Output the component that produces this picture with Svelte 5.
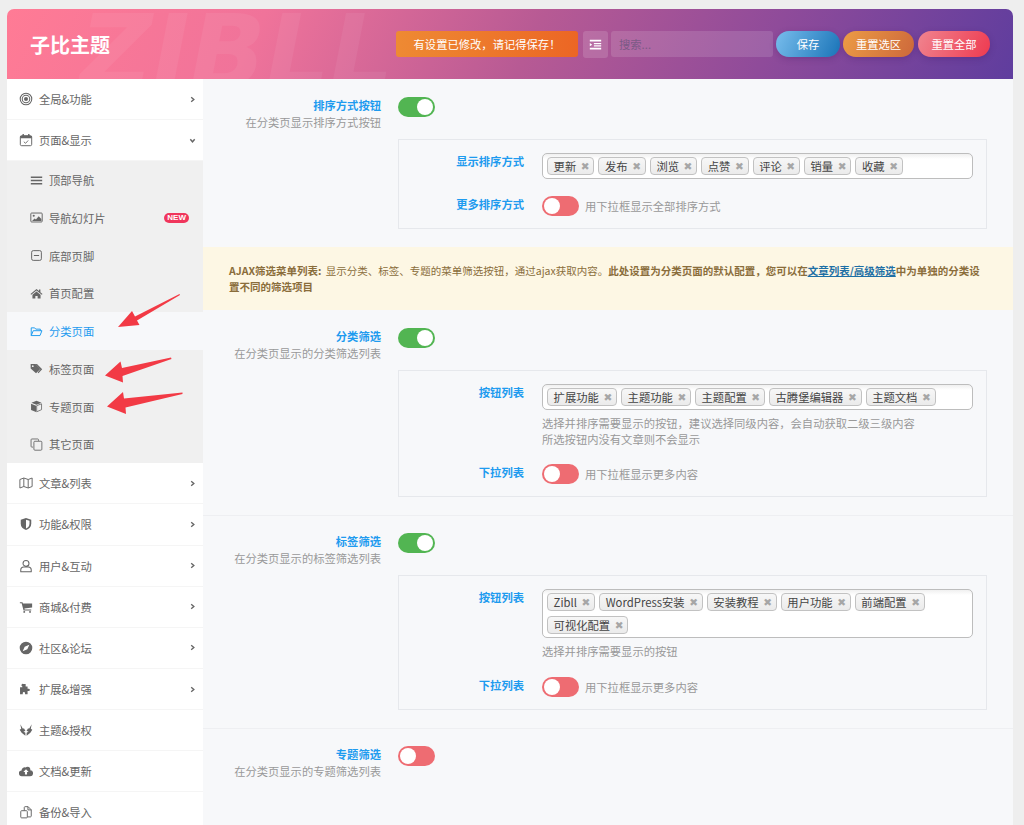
<script lang="ts">
  const icons: Record<string, string> = {
    target: '<circle cx="8" cy="8" r="6.6" fill="none" stroke="currentColor" stroke-width="1.2"/><circle cx="8" cy="8" r="4.3" fill="none" stroke="currentColor" stroke-width="1.2"/><circle cx="8" cy="8" r="2.3" fill="currentColor"/>',
    calendar: '<rect x="1.5" y="3" width="13" height="11.5" rx="1.5" fill="none" stroke="currentColor" stroke-width="1.1"/><path d="M1.5 3.5h13v2.5h-13zM4 1h1.6v3H4zM10.4 1H12v3h-1.6z" fill="currentColor"/><path d="M5.5 10l2 1.8 3-3.3" fill="none" stroke="currentColor" stroke-width="1"/>',
    bars: '<path d="M1 3h14v2H1zM1 7h14v2H1zM1 11h14v2H1z" fill="currentColor"/>',
    image: '<rect x="1" y="2.5" width="14" height="11" rx="1" fill="none" stroke="currentColor" stroke-width="1.2"/><circle cx="4.6" cy="5.8" r="1.3" fill="currentColor"/><path d="M2.500 12.200l3.200-3 1.600 1.300 3.400-4 3.300 3.400v2.300z" fill="currentColor"/>',
    minus: '<rect x="2" y="2" width="12" height="12" rx="2" fill="none" stroke="currentColor" stroke-width="1.2"/><path d="M4.800 7.400h6.400v1.200H4.800z" fill="currentColor"/>',
    home: '<path d="M8 2.400L.6 8.500l.9 1L8 4.200l6.500 5.300.9-1-2.600-2.100V3h-1.700v1.900zM3 9.600v4.600h3.600v-3.200h2.800v3.200H13V9.600L8 5.600z" fill="currentColor"/>',
    folder: '<path d="M1.500 13V3.500h4.200l1.400 1.600h5.600V7M1.500 13h10.800l2.400-6H4z" fill="none" stroke="currentColor" stroke-width="1.2" stroke-linejoin="round"/>',
    tags: '<path d="M.8 2.500h6l6 6-5.400 5.400-6.600-6zM3.400 4a1.100 1.100 0 100 2.200 1.100 1.100 0 000-2.200z" fill="currentColor" fill-rule="evenodd"/><path d="M8.600 2.500l6.400 6.300-4.600 5.100-1-1 3.400-4.100-6-6.300z" fill="currentColor"/>',
    cube: '<path d="M8 1l6.200 2.400L8 5.900 1.800 3.400zM1.300 4.500l6.100 2.500v7.800l-6.100-2.600z" fill="currentColor"/><path d="M14.200 4.700v7.200l-6 2.600V7z" fill="none" stroke="currentColor" stroke-width="1"/>',
    copy: '<path d="M10.500 3.500V2.200c0-.6-.4-1-1-1H2.300c-.6 0-1 .4-1 1v8c0 .6.4 1 1 1h1.400" fill="none" stroke="currentColor" stroke-width="1.1"/><rect x="4.800" y="4" width="9.800" height="11" rx="1.200" fill="none" stroke="currentColor" stroke-width="1.1"/>',
    map: '<path d="M1 4l4.500-1.700 5 1.700L15 2.300V12l-4.500 1.700-5-1.700L1 13.700zM5.500 2.300V12M10.500 4v9.700" fill="none" stroke="currentColor" stroke-width="1.1" stroke-linejoin="round"/>',
    shield: '<path d="M8 1.200l6 2v4.600c0 3.600-2.600 6-6 7-3.400-1-6-3.400-6-7V3.200z" fill="currentColor"/><path d="M8 3v10.200c2.300-.9 4-2.700 4-5.400V4.400z" fill="#fff"/>',
    user: '<circle cx="8" cy="5" r="3.400" fill="none" stroke="currentColor" stroke-width="1.2"/><path d="M2 14.600v-1.800c0-2.200 1.600-3.600 3.400-3.600h5.200c1.800 0 3.400 1.400 3.400 3.600v1.800z" fill="none" stroke="currentColor" stroke-width="1.2" stroke-linejoin="round"/>',
    cart: '<path d="M1 2.500h3l.5 1.400H15v4.700l-8.800 1 .2 1.200H14v1.300H5.200L3 3.800H1z" fill="currentColor"/><circle cx="6" cy="13.600" r="1.100" fill="currentColor"/><circle cx="12.600" cy="13.600" r="1.100" fill="currentColor"/>',
    compass: '<path d="M8 .8a7.200 7.200 0 110 14.400A7.200 7.200 0 018 .8zm3.800 3.400L6.500 6.500 4.200 11.800l5.300-2.300z" fill="currentColor" fill-rule="evenodd"/>',
    puzzle: '<path d="M5 2.200h2.600v3h2.200v2.600h1.300a1.300 1.300 0 110 2.600H9.800V14H6.900v-1.400a1.300 1.300 0 10-2.600 0V14H1.200V6h2.600V5.200A1.400 1.400 0 015 2.200z" fill="currentColor"/>',
    fox: '<path d="M1.500 1.500l2.800 4.700h1.500L7.400 9 5 9.600l2.300 1.400v3.500L3 11 .8 7.800l1.700-1.300zM14.500 1.500l-2.800 4.700h-1.500L8.600 9l2.400.6-2.300 1.400v3.500L13 11l2.200-3.200-1.700-1.300z" fill="currentColor"/>',
    cloud: '<path d="M12.800 7.200A3.200 3.200 0 007.500 4a3.600 3.600 0 00-4.600 3.300A3.200 3.200 0 003.500 14h9a3.400 3.400 0 00.3-6.800zM8 6l3 3.200H9.200V12H6.800V9.200H5z" fill="currentColor" fill-rule="evenodd"/>',
    paste: '<path d="M6 6.500V2.800c0-.5.4-.9.9-.9h3.500l3.600 3.600v7.200c0 .5-.4.9-.9.9H9.500M10.200 2v3.600H14" fill="none" stroke="currentColor" stroke-width="1.1"/><rect x="2" y="6.500" width="7.500" height="8.200" rx="1" fill="none" stroke="currentColor" stroke-width="1.1"/>',
  };

  type NavItem = { icon: string; label: string; chevron?: boolean; open?: boolean };
  const navTop: NavItem[] = [
    { icon: "target", label: "全局&功能", chevron: true },
    { icon: "calendar", label: "页面&显示", open: true },
  ];
  const subItems = [
    { icon: "bars", label: "顶部导航" },
    { icon: "image", label: "导航幻灯片", isNew: true },
    { icon: "minus", label: "底部页脚" },
    { icon: "home", label: "首页配置" },
    { icon: "folder", label: "分类页面", active: true },
    { icon: "tags", label: "标签页面" },
    { icon: "cube", label: "专题页面" },
    { icon: "copy", label: "其它页面" },
  ];
  const navBottom: NavItem[] = [
    { icon: "map", label: "文章&列表", chevron: true },
    { icon: "shield", label: "功能&权限", chevron: true },
    { icon: "user", label: "用户&互动", chevron: true },
    { icon: "cart", label: "商城&付费", chevron: true },
    { icon: "compass", label: "社区&论坛", chevron: true },
    { icon: "puzzle", label: "扩展&增强", chevron: true },
    { icon: "fox", label: "主题&授权" },
    { icon: "cloud", label: "文档&更新" },
    { icon: "paste", label: "备份&导入" },
  ];
</script>

{#snippet icon(name: string)}
  <svg class="ico" viewBox="0 0 16 16" aria-hidden="true">{@html icons[name]}</svg>
{/snippet}

{#snippet navRow(item: NavItem)}
  <div class="nav-row">
    {@render icon(item.icon)}
    <span>{item.label}</span>
    {#if item.chevron}
      <svg class="chev" viewBox="0 0 8 8"><path d="M2.500 1.500L5.500 4l-3 2.500" /></svg>
    {:else if item.open}
      <svg class="chev" viewBox="0 0 8 8"><path d="M1.500 2.500L4 5.500l2.500-3" /></svg>
    {/if}
  </div>
{/snippet}

{#snippet toggle(on: boolean, hint?: string)}
  <div class="toggle-line">
    <span class="toggle" class:on></span>
    {#if hint}<span class="hint">{hint}</span>{/if}
  </div>
{/snippet}

{#snippet tags(list: string[])}
  <div class="tag-field">
    {#each list as t}
      <span class="tag">{t}<b>✖</b></span>
    {/each}
  </div>
{/snippet}

<div class="page">
  <div class="panel">
    <header class="top">
      <div class="watermark">ZIBLL</div>
      <h1>子比主题</h1>
      <div class="tools">
        <div class="changed">有设置已修改，请记得保存！</div>
        <button class="square" aria-label="展开">
          <svg viewBox="0 0 16 16" width="13" height="13"><path d="M1 2h14v2.400H1zM6 6h9v1.600H6zM6 9h9v1.600H6zM1 12h14v2H1zM1 6.200l3 2-3 2z" fill="#fff" /></svg>
        </button>
        <div class="search">搜索...</div>
        <button class="pill blue">保存</button>
        <button class="pill orange">重置选区</button>
        <button class="pill red">重置全部</button>
      </div>
    </header>

    <div class="body">
      <nav class="side">
        {#each navTop as item}
          {@render navRow(item)}
        {/each}
        <div class="sub">
          {#each subItems as s}
            <div class="sub-row" class:active={s.active}>
              {@render icon(s.icon)}
              <span>{s.label}</span>
              {#if s.isNew}<em class="new">NEW</em>{/if}
            </div>
          {/each}
        </div>
        {#each navBottom as item}
          {@render navRow(item)}
        {/each}
      </nav>

      <main class="main">
        <section class="field">
          <div class="head">
            <div class="title">排序方式按钮</div>
            <div class="desc">在分类页显示排序方式按钮</div>
          </div>
          <div class="ctl">
            {@render toggle(true)}
            <div class="box">
              <div class="row">
                <div class="title">显示排序方式</div>
                {@render tags(["更新", "发布", "浏览", "点赞", "评论", "销量", "收藏"])}
              </div>
              <div class="row">
                <div class="title">更多排序方式</div>
                {@render toggle(false, "用下拉框显示全部排序方式")}
              </div>
            </div>
          </div>
        </section>

        <div class="notice">
          <strong class="lead">AJAX筛选菜单列表:</strong> 显示分类、标签、专题的菜单筛选按钮，通过ajax获取内容。<strong>此处设置为分类页面的默认配置，您可以在<a href="#top">文章列表/高级筛选</a>中为单独的分类设置不同的筛选项目</strong>
        </div>

        <section class="field">
          <div class="head">
            <div class="title">分类筛选</div>
            <div class="desc">在分类页显示的分类筛选列表</div>
          </div>
          <div class="ctl">
            {@render toggle(true)}
            <div class="box">
              <div class="row">
                <div class="title">按钮列表</div>
                <div>
                  {@render tags(["扩展功能", "主题功能", "主题配置", "古腾堡编辑器", "主题文档"])}
                  <p class="help">选择并排序需要显示的按钮，建议选择同级内容，会自动获取二级三级内容<br />所选按钮内没有文章则不会显示</p>
                </div>
              </div>
              <div class="row">
                <div class="title">下拉列表</div>
                {@render toggle(false, "用下拉框显示更多内容")}
              </div>
            </div>
          </div>
        </section>

        <section class="field ruled">
          <div class="head">
            <div class="title">标签筛选</div>
            <div class="desc">在分类页显示的标签筛选列表</div>
          </div>
          <div class="ctl">
            {@render toggle(true)}
            <div class="box">
              <div class="row">
                <div class="title">按钮列表</div>
                <div>
                  {@render tags(["Zibll", "WordPress安装", "安装教程", "用户功能", "前端配置", "可视化配置"])}
                  <p class="help">选择并排序需要显示的按钮</p>
                </div>
              </div>
              <div class="row">
                <div class="title">下拉列表</div>
                {@render toggle(false, "用下拉框显示更多内容")}
              </div>
            </div>
          </div>
        </section>

        <section class="field ruled">
          <div class="head">
            <div class="title">专题筛选</div>
            <div class="desc">在分类页显示的专题筛选列表</div>
          </div>
          <div class="ctl">
            {@render toggle(false)}
          </div>
        </section>
      </main>
    </div>
  </div>

  <!-- hand-drawn annotation arrows sit on top of the sidebar -->
  <svg class="arrows" viewBox="0 0 1024 825" aria-hidden="true">
    <path d="M179.500 294L135 316.500l-3-5.500-14 16 21.500-2-2.500-4.500 43-25.500z" />
    <path d="M171 357.500L122 368l-1.500-6.500-15.500 14 18 7-.5-6.500L171.500 359z" />
    <path d="M182.500 392.500L124 398.500l-1-6.500-16 14.500 19 7.500-.5-6.500 57-13.500z" />
  </svg>
</div>

<style>
  :global(body) {
    background: #eeeeee;
  }
  .page {
    position: relative;
    height: 825px;
    overflow: hidden;
    padding: 9px 11px 0 7px;
    box-sizing: border-box;
    font-family: "Noto Sans CJK SC", "Liberation Sans", sans-serif;
    font-size: 11.3px;
    color: #555;
  }
  .panel {
    height: 100%;
  }
  .top {
    position: relative;
    display: flex;
    align-items: center;
    justify-content: space-between;
    height: 70px;
    padding: 0 23px;
    overflow: hidden;
    border-radius: 7px 7px 0 0;
    background: linear-gradient(115deg, #ff7b95 0%, #f0739a 25%, #b75a94 52%, #8f4b9a 75%, #5f3d9e 100%);
  }
  .watermark {
    position: absolute;
    left: 73px;
    top: -7px;
    font: italic 700 100px/1 "DejaVu Sans", sans-serif;
    color: rgba(255, 255, 255, 0.06);
  }
  h1 {
    position: relative;
    margin: 0;
    font-size: 20px;
    font-weight: 700;
    color: #fff;
  }
  .tools {
    position: relative;
    display: flex;
    align-items: center;
  }
  .changed {
    width: 182px;
    height: 26px;
    line-height: 26px;
    text-align: center;
    color: #fff;
    border-radius: 3px;
    background: linear-gradient(90deg, #ee8a33, #ec6624);
  }
  .square {
    display: flex;
    align-items: center;
    justify-content: center;
    width: 25px;
    height: 27px;
    margin: 0 3px 0 5px;
    padding: 0;
    border: 0;
    border-radius: 3px;
    background: rgba(255, 255, 255, 0.14);
  }
  .search {
    width: 154px;
    height: 26px;
    line-height: 26px;
    padding-left: 8px;
    margin-right: 3px;
    color: #7c5a86;
    border-radius: 3px;
    background: rgba(255, 255, 255, 0.13);
  }
  .pill {
    height: 26px;
    margin: 0;
    padding: 0;
    border: 0;
    border-radius: 13px;
    color: #fff;
    font: inherit;
    box-shadow: 0 2px 6px rgba(60, 20, 90, 0.25);
  }
  .blue {
    width: 64px;
    background: linear-gradient(115deg, #78bdec, #1a74b8);
  }
  .orange {
    width: 71px;
    margin-left: 3px;
    background: linear-gradient(115deg, #ec9c45, #cd683b);
  }
  .red {
    width: 72px;
    margin-left: 4px;
    background: linear-gradient(115deg, #f0848f, #ee3a50);
  }

  .body {
    display: flex;
    height: 100%;
    background: #f7f8fa;
  }
  .side {
    flex: none;
    width: 196px;
    background: #fff;
  }
  .ico {
    flex: none;
    width: 14px;
    height: 14px;
    color: #666;
  }
  .nav-row {
    display: flex;
    align-items: center;
    gap: 6px;
    height: 40.15px;
    padding-left: 12px;
    border-bottom: 1px solid #f5f5f5;
    color: #666;
  }
  .nav-row span {
    flex: 1;
  }
  .chev {
    width: 7px;
    height: 7px;
    margin-right: 7px;
    fill: none;
    stroke: #666;
    stroke-width: 1.6;
  }
  .sub {
    background: #f0f0f0;
  }
  .sub-row {
    display: flex;
    align-items: center;
    gap: 6px;
    height: 37.75px;
    padding-left: 23px;
    color: #666;
  }
  .sub-row .ico {
    width: 13px;
    height: 13px;
  }
  .sub-row span {
    flex: 1;
  }
  .sub-row.active {
    background: #f7f8fa;
    color: #1e9bef;
  }
  .sub-row.active .ico {
    color: #1e9bef;
  }
  .new {
    margin-right: 14px;
    padding: 0 3px;
    height: 10px;
    border-radius: 5px;
    background: #f0365c;
    color: #fff;
    font: normal 700 8px/10px "Liberation Sans", sans-serif;
  }

  .main {
    flex: 1;
    min-width: 0;
  }
  .field {
    display: grid;
    grid-template-columns: 178px 1fr;
    column-gap: 17px;
    padding: 18px 26px 18px 0;
  }
  .field.ruled {
    padding-top: 17px;
    border-top: 1px solid #eeeff2;
  }
  .head {
    text-align: right;
  }
  .title {
    color: #1e9bef;
    font-weight: 700;
    line-height: 16px;
  }
  .desc {
    margin-top: 1px;
    color: #999;
    line-height: 17px;
  }
  .toggle-line {
    display: flex;
    align-items: center;
    gap: 6px;
  }
  .toggle {
    flex: none;
    position: relative;
    width: 37px;
    height: 20px;
    border-radius: 10px;
    background: #ee6c72;
  }
  .toggle::after {
    content: "";
    position: absolute;
    top: 2px;
    left: 2px;
    width: 16px;
    height: 16px;
    border-radius: 50%;
    background: #fff;
  }
  .toggle.on {
    background: #52b552;
  }
  .toggle.on::after {
    left: 19px;
  }
  .hint {
    color: #999;
  }
  .box {
    margin-top: 22px;
    padding: 13px 13px 12px 0;
    border: 1px solid #e6e8ec;
  }
  .row {
    display: grid;
    grid-template-columns: 125px 1fr;
    column-gap: 18px;
  }
  .row + .row {
    margin-top: 17px;
  }
  .row > .title {
    text-align: right;
  }
  .tag-field {
    display: flex;
    flex-wrap: wrap;
    gap: 5px 4px;
    padding: 3px 4px;
    border: 1px solid #bdbdbd;
    border-radius: 5px;
    background: linear-gradient(#f0f0f0, #fff 5px);
  }
  .tag {
    display: flex;
    align-items: center;
    gap: 4px;
    box-sizing: border-box;
    height: 18px;
    padding: 0 3.200px 0 5.600px;
    border: 1px solid #c2c2c2;
    border-radius: 4px;
    background: linear-gradient(#f7f7f7, #ebebeb);
    color: #444;
    line-height: 16px;
  }
  .tag b {
    width: 10px;
    text-align: center;
    font: 700 10.500px/1 "DejaVu Sans", sans-serif;
    color: #a6a6a6;
  }
  .help {
    margin: 6px 0 0;
    color: #999;
    line-height: 15.500px;
  }
  .notice {
    padding: 15.500px 32px 15.500px 26px;
    line-height: 16px;
    font-size: 10.500px;
    background: #fdf7e4;
    color: #8a6d3b;
  }
  .lead {
    margin-right: 2px;
  }
  .notice a {
    color: #1d6fa5;
    text-decoration: underline;
  }
  .arrows {
    position: absolute;
    inset: 0;
    width: 1024px;
    height: 825px;
    fill: #f23a45;
    pointer-events: none;
  }
</style>
